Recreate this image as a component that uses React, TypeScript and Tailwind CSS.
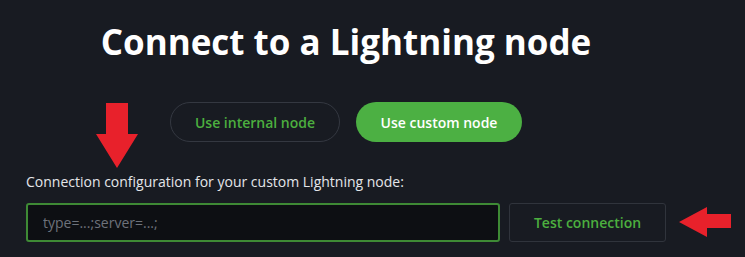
import React from 'react';

function ArrowDown() {
  return (
    <svg width="44" height="66" viewBox="0 0 44 66" className="absolute left-[95px] top-[103px]">
      <path d="M11 0 H33 V31 H43 L22 65 L1 31 H11 Z" fill="#e8212b" />
    </svg>
  );
}

function ArrowLeft() {
  return (
    <svg width="53" height="31" viewBox="0 0 53 31" className="absolute left-[679px] top-[207px]">
      <path d="M0 15 L28 0 V7 H52 V21 H28 V30 Z" fill="#e8212b" />
    </svg>
  );
}

export default function App() {
  return (
    <div
      className="relative h-[257px] w-[745px] overflow-hidden bg-[#181b22]"
      style={{ fontFamily: '"Open Sans", sans-serif' }}
    >
      <div className="ml-[26px] flex w-[640px] flex-col">
        <h1 className="mt-[19px] text-center text-[35px] font-bold leading-[46px] text-white">
          Connect to a Lightning node
        </h1>

        <div className="mt-[37px] flex justify-center gap-4">
          <button className="h-[40px] w-[170px] rounded-full border border-[#343841] text-[14px] font-semibold text-[#4caf3f]">
            Use internal node
          </button>
          <button className="h-[40px] w-[166px] rounded-full bg-[#4cb043] text-[14px] font-semibold text-white">
            Use custom node
          </button>
        </div>

        <p className="mt-[30px] text-[14px] leading-[20px] text-[#e4e6ea]">
          Connection configuration for your custom Lightning node:
        </p>

        <div className="mt-[11px] flex gap-[9px]">
          <input
            className="h-[39px] w-[474px] rounded-[3px] border-2 border-[#3e8a35] bg-[#0d0f13] px-[15px] text-[14px] text-[#e4e6ea] outline-none placeholder:text-[#6d727b]"
            placeholder="type=...;server=...;"
          />
          <button className="h-[39px] w-[157px] rounded-[3px] border border-[#30343c] text-[14px] font-semibold text-[#4caf3f]">
            Test connection
          </button>
        </div>
      </div>

      <ArrowDown />
      <ArrowLeft />
    </div>
  );
}
